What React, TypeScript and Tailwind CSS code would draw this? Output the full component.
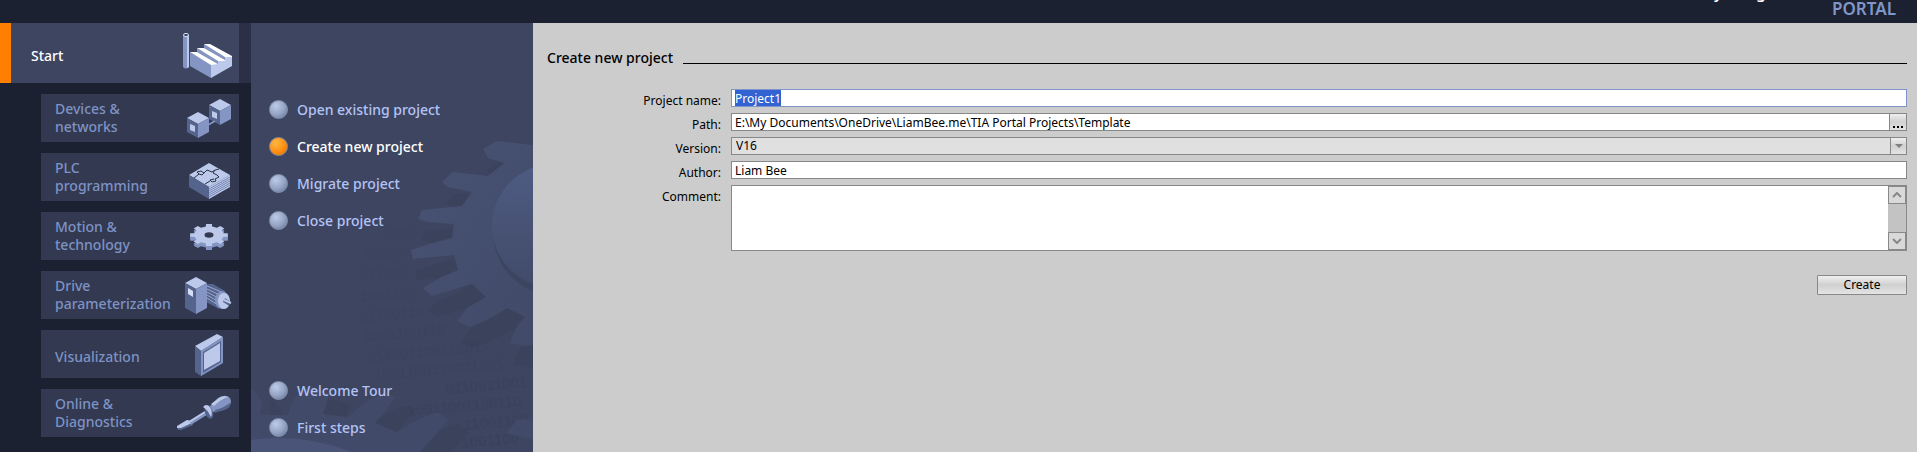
import { useEffect, useRef, useState } from 'react';
import type { ReactNode } from 'react';
import clsx from 'clsx';

// builds a toothed outline, squashed vertically to look isometric
function gearPath(cx: number, cy: number, rx: number, ry: number, teeth: number) {
  const pts: string[] = [];
  const step = (Math.PI * 2) / teeth;
  for (let i = 0; i < teeth; i++) {
    const a = i * step;
    [
      [a - step * 0.27, 0.78],
      [a - step * 0.2, 1],
      [a + step * 0.2, 1],
      [a + step * 0.27, 0.78],
    ].forEach(([angle, r]) => {
      pts.push(`${(cx + Math.cos(angle) * rx * r).toFixed(1)},${(cy + Math.sin(angle) * ry * r).toFixed(1)}`);
    });
  }
  return `M${pts.join('L')}Z`;
}

function NavIcon({ children }: { children: ReactNode }) {
  return (
    <svg viewBox="-4 0 64 48" className="w-16 h-12 shrink-0" aria-hidden="true">
      {children}
    </svg>
  );
}

function FactoryIcon() {
  return (
    <svg viewBox="-4 0 64 60" className="w-16 h-[60px] shrink-0" aria-hidden="true">
      <path d="M4 12V44Q7 47 10 44V12Z" fill="#8495c3" />
      <path d="M8 12V45L10 44V12Z" fill="#bcc9ea" />
      <ellipse cx="7" cy="12" rx="2.5" ry="1.6" fill="#3d4561" stroke="#d5def5" />
      <path d="M11 29L32 41V55L11 43Z" fill="#8495c3" />
      <path d="M18 25L39 37V41L18 29ZM25 21L46 33V37L25 25Z" fill="#8495c3" />
      <path d="M32 55V41H39V37H46V33H53V43Z" fill="#bcc9ea" />
      <path d="M25 21H31L53 33V34H46ZM18 25H25L46 37V38H39ZM11 29H18L39 41L32 42Z" fill="#fff" />
    </svg>
  );
}

function Cube() {
  return (
    <>
      <path d="M19 18L30 24L19 30L8 24Z" fill="#bcc9ea" />
      <path d="M8 24L19 30V44L8 38Z" fill="#55648c" />
      <path d="M30 24L19 30V44L30 38Z" fill="#8495c3" />
      <path d="M11 30L16 32V38L11 36Z" fill="#bcc9ea" />
    </>
  );
}

function DevicesIcon() {
  return (
    <NavIcon>
      <g transform="translate(22 -13)">
        <Cube />
      </g>
      <path d="M29 31L36 27" stroke="#8495c3" strokeWidth="2" />
      <Cube />
    </NavIcon>
  );
}

function PlcIcon() {
  return (
    <NavIcon>
      <path d="M30 10L51 22L30 34L10 22Z" fill="#bcc9ea" />
      <path d="M10 22L30 34V46L10 34Z" fill="#55648c" />
      <path d="M51 22L30 34V46L51 34Z" fill="#bcc9ea" />
      <path d="M30 36L51 24M30 38L51 26M30 40L51 28M30 42L51 30M30 44L51 32" stroke="#7485b3" />
      <path
        d="M15 25L20 21L18 19L22 18L25 20L28 17L33 19L36 17L40 16M36 17L34 20L38 22L40 24L36 26L37 28L33 29L31 27L35 26M31 28L26 31M20 21L23 22L25 20"
        fill="none"
        stroke="#2b3147"
      />
    </NavIcon>
  );
}

function GearIcon() {
  return (
    <NavIcon>
      <path d={gearPath(30, 27, 19, 11, 8)} fill="#8495c3" />
      <path d={gearPath(30, 26, 19, 11, 8)} fill="#8495c3" />
      <path d={gearPath(30, 25, 19, 11, 8)} fill="#8495c3" />
      <path d={gearPath(30, 23, 19, 11, 8)} fill="#bcc9ea" />
      <ellipse cx="30" cy="23" rx="4.5" ry="2.8" fill="#323950" />
    </NavIcon>
  );
}

function DriveIcon() {
  return (
    <NavIcon>
      <path d="M27 13L34 13L46 20L40 38L27 31Z" fill="#55648c" />
      <path d="M28 15L45 22M28 18L43 25M28 21L41 28M28 24L40 31M28 27L39 34" stroke="#9aa9d2" />
      <ellipse cx="43" cy="29" rx="7" ry="9" fill="#8495c3" />
      <ellipse cx="45" cy="30" rx="6" ry="8" fill="#bcc9ea" />
      <path d="M45 29L51 33" stroke="#55648c" strokeWidth="4" />
      <path d="M45 29L52 32" stroke="#bcc9ea" strokeWidth="2" />
      <path d="M17 6L28 12L17 18L6 12Z" fill="#bcc9ea" />
      <path d="M6 12L17 18V43L6 37Z" fill="#55648c" />
      <path d="M28 12L17 18V43L28 37Z" fill="#8495c3" />
      <path d="M9 17L14 20V26L9 23Z" fill="#d5def5" />
    </NavIcon>
  );
}

function PanelIcon() {
  return (
    <NavIcon>
      <path d="M16 16L38 4L44 7L22 21Z" fill="#bcc9ea" />
      <path d="M16 16L22 21V46L16 42Z" fill="#55648c" />
      <path d="M22 21L44 7V33L22 46Z" fill="#8495c3" />
      <path d="M24 22L42 11V32L24 43Z" fill="#55648c" />
      <path d="M25 23L41 13V31L25 40Z" fill="#bcc9ea" />
    </NavIcon>
  );
}

function ScrewdriverIcon() {
  return (
    <NavIcon>
      <path d="M-2 38L8 31L13 33L14 36L2 41L-1 41Z" fill="#55648c" />
      <path d="M-2 37L8 31L12 32L13 34L2 39L-2 39Z" fill="#bcc9ea" />
      <path d="M11 34L27 24" stroke="#8495c3" strokeWidth="4" />
      <path d="M10 33L26 23" stroke="#bcc9ea" strokeWidth="2" />
      <ellipse cx="30" cy="23" rx="4" ry="7" transform="rotate(-18 30 23)" fill="#55648c" />
      <path d="M31 17L39 9Q45 5 50 8Q54 12 50 18L45 21L34 23Z" fill="#8495c3" />
      <path d="M32 15L40 9Q45 6 49 8Q42 10 35 17Z" fill="#bcc9ea" />
      <path d="M36 24L48 20Q52 17 52 13Q47 18 36 21Z" fill="#55648c" />
      <path d="M24 18Q27 14 31 18Q34 23 32 28Q28 20 24 18Z" fill="#bcc9ea" />
    </NavIcon>
  );
}

const TEXTURE = [
  [382, 240, '1001'],
  [366, 260, '00110'],
  [360, 281, '011001'],
  [360, 302, '1001100'],
  [360, 322, '01100110'],
  [364, 342, '1001100110'],
  [368, 362, '01100110011001'],
  [374, 380, '1001100110011001'],
  [446, 394, '0110011001'],
  [408, 416, '10011001100110'],
  [464, 430, '11001100'],
  [462, 448, '1001100'],
] as const;

const BIG_GEAR =
  'M540 146L515 143L497 141L483 149L488 158L504 163L488 176L453 172L442 182L448 187L472 192L462 206L422 210L418 219L427 222L454 224L452 238L433 243L411 250L413 259L454 255L458 270L440 278L423 288L432 296L472 284L486 297L467 308L457 321L469 327Q490 320 507 308L525 317Q514 328 510 343L527 346L540 343Z';

const LOW_GEAR =
  'M251 389L254 390L262 402L260 415H288Q292 392 312 387L330 393L323 414L348 417Q368 396 387 394L396 397L375 423L397 432Q418 418 438 412L449 420L420 452H251Z';

function GearBackdrop() {
  return (
    <svg
      viewBox="251 23 282 429"
      className="absolute right-0 top-0 w-[282px] h-[429px] pointer-events-none"
      aria-hidden="true"
    >
      <defs>
        <linearGradient id="hub" x1="0" y1="0" x2="0" y2="1">
          <stop offset="0" stopColor="#4e5b82" />
          <stop offset="1" stopColor="#414a68" />
        </linearGradient>
        <linearGradient id="wheel" x1="0" y1="0" x2="1" y2="1">
          <stop offset="0" stopColor="#485273" />
          <stop offset="1" stopColor="#414a68" />
        </linearGradient>
      </defs>
      <path d={BIG_GEAR} fill="#3a425c" transform="translate(4 21)" />
      <path d={LOW_GEAR} fill="#3a425c" transform="translate(20 12)" />
      <g fill="#394159" fontFamily="Liberation Sans, sans-serif" fontSize="15" fontWeight="bold">
        {TEXTURE.map(([x, y, digits], i) => (
          <text key={y} x={x} y={y} transform={`rotate(-5 ${x} ${y})`} opacity={0.1 + i * 0.05}>
            {digits}
          </text>
        ))}
      </g>
      <path d={BIG_GEAR} fill="url(#wheel)" />
      <circle cx="557" cy="232" r="64" fill="#3c4560" />
      <circle cx="554" cy="226" r="62" fill="url(#hub)" />
      <path d={LOW_GEAR} fill="#414a68" />
      <path d="M251 440Q300 432 352 452H251Z" fill="#4a5478" />
      <path d="M533 419L517 420L506 433L533 440Z" fill="#414a68" />
    </svg>
  );
}

const navItems = [
  { label: 'Devices &\nnetworks', icon: <DevicesIcon /> },
  { label: 'PLC\nprogramming', icon: <PlcIcon /> },
  { label: 'Motion &\ntechnology', icon: <GearIcon /> },
  { label: 'Drive\nparameterization', icon: <DriveIcon /> },
  { label: 'Visualization', icon: <PanelIcon /> },
  { label: 'Online &\nDiagnostics', icon: <ScrewdriverIcon /> },
];

const projectActions = ['Open existing project', 'Create new project', 'Migrate project', 'Close project'];
const helpActions = ['Welcome Tour', 'First steps'];

interface ActionListProps {
  actions: string[];
  active: string;
  onSelect: (action: string) => void;
}

function ActionList({ actions, active, onSelect }: ActionListProps) {
  return (
    <ul className="flex flex-col gap-[18px]">
      {actions.map((action) => (
        <li key={action}>
          <button
            type="button"
            onClick={() => onSelect(action)}
            className={clsx(
              'flex items-center gap-[9px] h-[19px] text-sm leading-[18px] font-medium',
              action === active ? 'text-white' : 'text-[#b4c3f5]'
            )}
          >
            <span
              className={clsx(
                'size-[19px] rounded-full border',
                action === active
                  ? 'border-[#8f8f93] bg-[radial-gradient(circle_at_35%_30%,#ffb944,#ff8a0c_60%,#d96c00)]'
                  : 'border-[#8492ac] bg-[radial-gradient(circle_at_35%_30%,#bccbe8,#93a2c2_55%,#5f6f90)]'
              )}
            />
            {action}
          </button>
        </li>
      ))}
    </ul>
  );
}

const labelClass = 'text-right text-xs leading-4 pt-1';
const fieldClass = 'w-full min-w-0 h-[18px] px-[3px] border border-[#888] bg-white text-xs leading-[14px] outline-none';
const bevelClass = 'border border-[#888] bg-linear-to-b from-[#efefef] via-[#d0d0d0] to-[#e4e4e4]';

export default function App() {
  const [active, setActive] = useState('Create new project');
  const [name, setName] = useState('Project1');
  const [path, setPath] = useState('E:\\My Documents\\OneDrive\\LiamBee.me\\TIA Portal Projects\\Template');
  const [author, setAuthor] = useState('Liam Bee');
  const [comment, setComment] = useState('');
  const nameRef = useRef<HTMLInputElement>(null);

  useEffect(() => {
    nameRef.current?.focus();
    nameRef.current?.select();
  }, []);

  return (
    <div className="min-h-screen flex flex-col bg-[#1b2130] font-['Noto_Sans',sans-serif] text-black">
      <header className="h-[23px] shrink-0 overflow-hidden flex flex-col justify-end items-end pr-[21px] pb-[7px] text-[17px] leading-[15px] font-semibold">
        <span className="text-[15px] text-white">Totally Integrated Automation</span>
        <span className="text-[#8096c8]">PORTAL</span>
      </header>

      <div className="flex-1 flex">
        {/* Portal navigation */}
        <nav className="w-[251px] shrink-0 text-sm leading-[18px] font-medium">
          <div className="flex bg-[#2b2f47] pr-3">
            <button
              type="button"
              className="flex-1 flex items-center justify-between h-[60px] border-l-[11px] border-[#ff8000] bg-[#3d4561] pl-5 text-white"
            >
              <span className="pt-[6px]">Start</span>
              <FactoryIcon />
            </button>
          </div>
          <ul className="flex flex-col gap-[11px] pt-[11px] pl-[41px] pr-3">
            {navItems.map((item) => (
              <li key={item.label}>
                <button
                  type="button"
                  className="w-full h-12 flex items-center justify-between bg-[#323950] pl-[14px] text-left text-[#7f92c4]"
                >
                  <span className={clsx('w-[120px] whitespace-pre', !item.label.includes('\n') && 'pt-[6px]')}>
                    {item.label}
                  </span>
                  {item.icon}
                </button>
              </li>
            ))}
          </ul>
        </nav>

        {/* Project actions */}
        <section className="relative w-[282px] shrink-0 bg-[#3d4561] overflow-hidden">
          <GearBackdrop />
          <div className="relative h-full flex flex-col justify-between pt-[77px] pb-[15px] pl-[18px]">
            <ActionList actions={projectActions} active={active} onSelect={setActive} />
            <ActionList actions={helpActions} active={active} onSelect={setActive} />
          </div>
        </section>

        {/* Create form */}
        <main className="flex-1 min-w-0 bg-[#ccc] pl-[14px] pr-[10px] pt-[25px]">
          <div className="flex items-end gap-[10px]">
            <h1 className="text-sm leading-5 font-medium">Create new project</h1>
            <div className="flex-1 h-px mb-1 bg-black" />
          </div>

          <form onSubmit={(e) => e.preventDefault()} className="pt-[21px]">
            <div className="grid grid-cols-[174px_1fr] gap-x-[10px] gap-y-[6px]">
              <label htmlFor="name" className={clsx(labelClass, 'h-[18px]')}>Project name:</label>
              <input
                id="name"
                ref={nameRef}
                value={name}
                onChange={(e) => setName(e.target.value)}
                className={clsx(fieldClass, 'focus:border-[#8094cc] selection:bg-[#3163d2] selection:text-white')}
              />

              <label htmlFor="path" className={clsx(labelClass, 'h-[18px]')}>Path:</label>
              <div className="flex">
                <input id="path" value={path} onChange={(e) => setPath(e.target.value)} className={fieldClass} />
                <button
                  type="button"
                  aria-label="Browse"
                  className={clsx(bevelClass, 'w-[17px] h-[18px] shrink-0 border-l-0 flex items-end justify-center gap-[2px] pb-[2px]')}
                >
                  <span className="size-[2px] bg-black" />
                  <span className="size-[2px] bg-black" />
                  <span className="size-[2px] bg-black" />
                </button>
              </div>

              <label htmlFor="version" className={clsx(labelClass, 'h-[18px]')}>Version:</label>
              <div className="relative h-[18px]">
                <select
                  id="version"
                  disabled
                  className="block w-full h-[18px] appearance-none border border-[#888] bg-[#e0e0e0] px-1 text-xs leading-4 text-black opacity-100"
                >
                  <option>V16</option>
                </select>
                <span
                  className={clsx(bevelClass, 'absolute right-0 top-0 w-[17px] h-[18px] flex items-center justify-center pointer-events-none')}
                >
                  <svg viewBox="0 0 8 4" className="w-2 h-1" aria-hidden="true">
                    <path d="M0 0H8L4 4Z" fill="#808080" />
                  </svg>
                </span>
              </div>

              <label htmlFor="author" className={clsx(labelClass, 'h-[18px]')}>Author:</label>
              <input id="author" value={author} onChange={(e) => setAuthor(e.target.value)} className={fieldClass} />

              <label htmlFor="comment" className={labelClass}>Comment:</label>
              <div className="flex h-[66px] border border-[#888] bg-white">
                <textarea
                  id="comment"
                  value={comment}
                  onChange={(e) => setComment(e.target.value)}
                  className="flex-1 px-[3px] text-xs leading-4 resize-none outline-none [scrollbar-width:none]"
                />
                <div className="w-[18px] flex flex-col justify-between bg-[#c3c3c3]">
                  <button
                    type="button"
                    aria-label="Scroll up"
                    className="h-[18px] flex items-center justify-center border border-[#888] bg-[#d9d9d9]"
                  >
                    <svg viewBox="0 0 10 6" className="w-[10px] h-[6px]" aria-hidden="true">
                      <path d="M1 5L5 1L9 5" fill="none" stroke="#888" strokeWidth="2" />
                    </svg>
                  </button>
                  <button
                    type="button"
                    aria-label="Scroll down"
                    className="h-[18px] flex items-center justify-center border border-[#888] bg-[#d9d9d9]"
                  >
                    <svg viewBox="0 0 10 6" className="w-[10px] h-[6px]" aria-hidden="true">
                      <path d="M1 1L5 5L9 1" fill="none" stroke="#888" strokeWidth="2" />
                    </svg>
                  </button>
                </div>
              </div>
            </div>

            <div className="flex justify-end pt-6">
              <button type="submit" className={clsx(bevelClass, 'w-[90px] h-5 rounded-[1px] text-xs leading-4')}>
                Create
              </button>
            </div>
          </form>
        </main>
      </div>
    </div>
  );
}
